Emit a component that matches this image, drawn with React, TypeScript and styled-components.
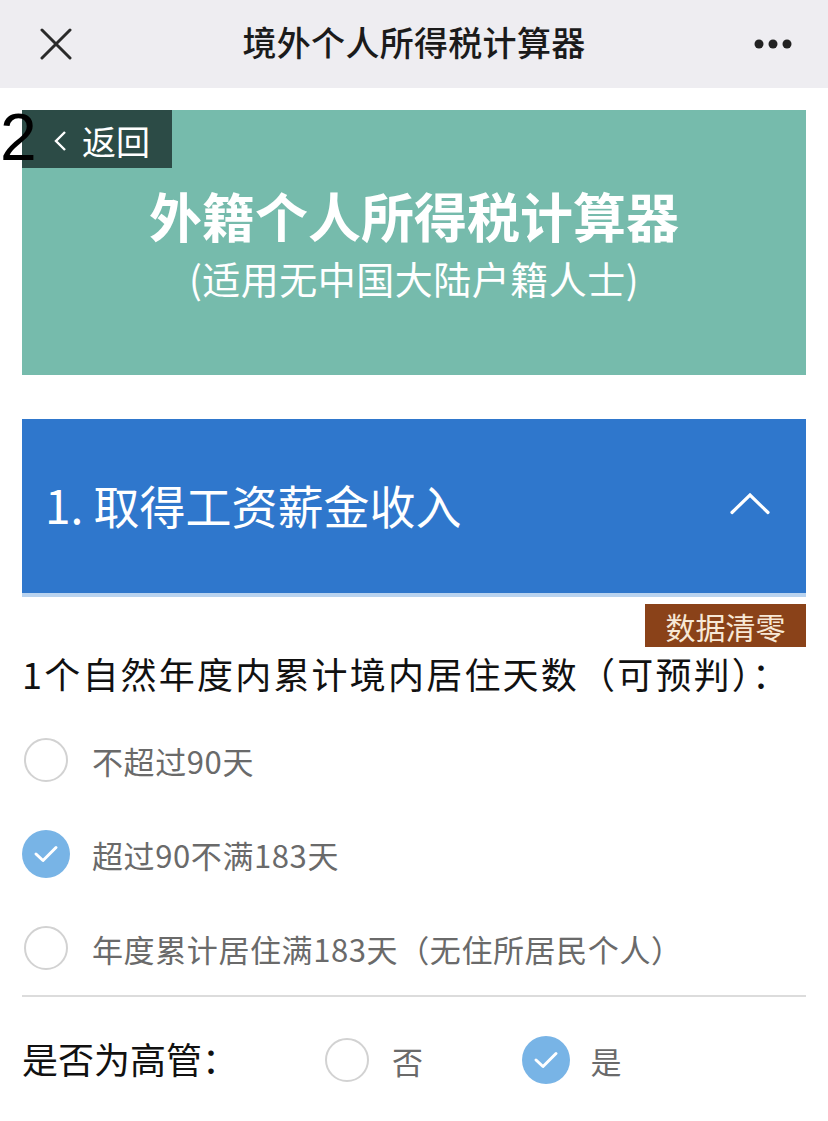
import React from "react";
import styled, { createGlobalStyle } from "styled-components";

const GlobalStyle = createGlobalStyle`
  html, body {
    margin: 0;
    padding: 0;
    background: #ffffff;
  }
  body {
    font-family: "Noto Sans CJK SC", "Noto Sans", "Liberation Sans", sans-serif;
    -webkit-font-smoothing: antialiased;
  }
  * { box-sizing: border-box; }
`;

const Page = styled.div`
  position: relative;
  width: 828px;
  min-height: 1121px;
  background: #ffffff;
  overflow: hidden;
`;

const TopBar = styled.header`
  height: 88px;
  background: #eeedf1;
  display: grid;
  grid-template-columns: 120px 1fr 120px;
  align-items: center;
`;

const BarIcon = styled.div<{ $align: "start" | "end" }>`
  display: flex;
  justify-content: ${(p) => (p.$align === "start" ? "flex-start" : "flex-end")};
  padding: ${(p) => (p.$align === "start" ? "0 0 0 40px" : "0 36px 0 0")};
  align-items: center;
`;

const BarTitle = styled.h1`
  margin: 0;
  text-align: center;
  font-size: 34px;
  font-weight: 500;
  color: #1b1b1b;
  letter-spacing: 0.3px;
  line-height: 1;
  padding-bottom: 4px;
`;

const PageMark = styled.span`
  position: absolute;
  left: 0;
  top: 104px;
  font-family: "Liberation Sans", Arial, sans-serif;
  font-size: 66px;
  line-height: 1;
  color: #000;
  z-index: 2;
`;

const Content = styled.main`
  padding: 22px 22px 0;
`;

const Banner = styled.section`
  height: 265px;
  background: #76bbac;
  display: flex;
  flex-direction: column;
  align-items: center;
`;

const BackButton = styled.button`
  align-self: flex-start;
  width: 150px;
  height: 58px;
  border: none;
  background: #2c4b46;
  color: #ffffff;
  display: flex;
  align-items: center;
  gap: 14px;
  padding: 4px 0 0 32px;
  font-family: inherit;
  font-size: 34px;
  line-height: 1;
  cursor: pointer;
`;

const BannerTitle = styled.h2`
  margin: 14px 0 0;
  font-size: 53px;
  line-height: 66px;
  font-weight: 700;
  color: #ffffff;
  letter-spacing: 0px;
`;

const BannerSub = styled.p`
  margin: 7px 0 0;
  font-size: 38px;
  line-height: 46px;
  color: #ffffff;
  font-weight: 400;
  letter-spacing: 0.5px;
`;

const SectionHeader = styled.div`
  margin-top: 44px;
  height: 178px;
  background: #2f77cc;
  border-bottom: 4px solid #b9d3ef;
  display: flex;
  align-items: center;
  justify-content: space-between;
  padding: 0 36px 4px 23px;
`;

const SectionTitle = styled.h3`
  margin: 0;
  font-size: 46px;
  font-weight: 400;
  color: #ffffff;
  line-height: 1;
`;

const ToolRow = styled.div`
  display: flex;
  justify-content: flex-end;
  margin-top: 7px;
`;

const ClearButton = styled.button`
  width: 161px;
  height: 43px;
  border: none;
  background: #8a4219;
  color: #f7e8d6;
  font-family: inherit;
  font-size: 30px;
  line-height: 1;
  padding: 0;
  display: flex;
  align-items: center;
  justify-content: center;
`;

const Question = styled.p`
  margin: 4px 0 0;
  font-size: 36px;
  line-height: 44px;
  color: #111;
  white-space: nowrap;
  letter-spacing: 2.2px;
`;

const RadioList = styled.div`
  margin-top: 18px;
  display: flex;
  flex-direction: column;
`;

const RadioRow = styled.label`
  height: 94px;
  display: flex;
  align-items: center;
  gap: 22px;
`;

const Circle = styled.span<{ $checked?: boolean }>`
  flex: none;
  width: ${(p) => (p.$checked ? "48px" : "44px")};
  height: ${(p) => (p.$checked ? "48px" : "44px")};
  margin: ${(p) => (p.$checked ? "0" : "0 2px")};
  border-radius: 50%;
  border: ${(p) => (p.$checked ? "none" : "2px solid #d2d2d2")};
  background: ${(p) => (p.$checked ? "#78b4e6" : "#ffffff")};
  display: flex;
  align-items: center;
  justify-content: center;
`;

const OptionText = styled.span`
  font-size: 31px;
  color: #6a6a6a;
  line-height: 1;
  white-space: nowrap;
  letter-spacing: 0.6px;
`;

const Divider = styled.hr`
  margin: 0;
  border: none;
  height: 2px;
  background: #dcdcdc;
`;

const InlineRow = styled.div`
  height: 130px;
  display: flex;
  align-items: center;
`;

const InlineLabel = styled.span`
  width: 301px;
  font-size: 36px;
  color: #111;
  line-height: 1;
  padding-bottom: 8px;
`;

const InlineOptions = styled.div`
  display: flex;
  align-items: center;
  gap: 98px;
  padding-bottom: 4px;
`;

const InlineOption = styled.label`
  display: flex;
  align-items: center;
  gap: 21px;
`;

const Check = () => (
  <svg width="26" height="20" viewBox="0 0 26 20">
    <polyline
      points="3,10 10,16.5 23,3.5"
      fill="none"
      stroke="#ffffff"
      strokeWidth="3"
      strokeLinecap="round"
      strokeLinejoin="round"
    />
  </svg>
);

const Radio = ({ checked }: { checked?: boolean }) => (
  <Circle $checked={checked}>{checked && <Check />}</Circle>
);

const CloseIcon = () => (
  <svg width="32" height="32" viewBox="0 0 32 32">
    <path d="M2 2 L30 30 M30 2 L2 30" stroke="#2a2a2a" strokeWidth="3" strokeLinecap="round" />
  </svg>
);

const MoreIcon = () => (
  <svg width="38" height="10" viewBox="0 0 38 10">
    <circle cx="5" cy="5" r="4.5" fill="#222" />
    <circle cx="19" cy="5" r="4.5" fill="#222" />
    <circle cx="33" cy="5" r="4.5" fill="#222" />
  </svg>
);

const BackChevron = () => (
  <svg width="14" height="22" viewBox="0 0 14 22">
    <polyline points="11,2 2,11 11,20" fill="none" stroke="#ffffff" strokeWidth="2.4" strokeLinejoin="miter" />
  </svg>
);

const UpChevron = () => (
  <svg width="40" height="22" viewBox="0 0 40 22">
    <polyline points="2,19.5 20,2 38,19.5" fill="none" stroke="#ffffff" strokeWidth="3.2" strokeLinecap="round" />
  </svg>
);

const stayOptions = [
  { label: "不超过90天", checked: false },
  { label: "超过90不满183天", checked: true },
  { label: "年度累计居住满183天（无住所居民个人）", checked: false },
];

export default function App() {
  return (
    <>
      <GlobalStyle />
      <Page>
        <TopBar>
          <BarIcon $align="start">
            <CloseIcon />
          </BarIcon>
          <BarTitle>境外个人所得税计算器</BarTitle>
          <BarIcon $align="end">
            <MoreIcon />
          </BarIcon>
        </TopBar>
        <PageMark>2</PageMark>
        <Content>
          <Banner>
            <BackButton>
              <BackChevron />
              返回
            </BackButton>
            <BannerTitle>外籍个人所得税计算器</BannerTitle>
            <BannerSub>(适用无中国大陆户籍人士)</BannerSub>
          </Banner>

          <SectionHeader>
            <SectionTitle>1. 取得工资薪金收入</SectionTitle>
            <UpChevron />
          </SectionHeader>

          <ToolRow>
            <ClearButton>数据清零</ClearButton>
          </ToolRow>

          <Question>1个自然年度内累计境内居住天数（可预判）：</Question>

          <RadioList>
            {stayOptions.map((o) => (
              <RadioRow key={o.label}>
                <Radio checked={o.checked} />
                <OptionText>{o.label}</OptionText>
              </RadioRow>
            ))}
          </RadioList>

          <Divider />

          <InlineRow>
            <InlineLabel>是否为高管：</InlineLabel>
            <InlineOptions>
              <InlineOption>
                <Radio />
                <OptionText>否</OptionText>
              </InlineOption>
              <InlineOption>
                <Radio checked />
                <OptionText>是</OptionText>
              </InlineOption>
            </InlineOptions>
          </InlineRow>
        </Content>
      </Page>
    </>
  );
}
